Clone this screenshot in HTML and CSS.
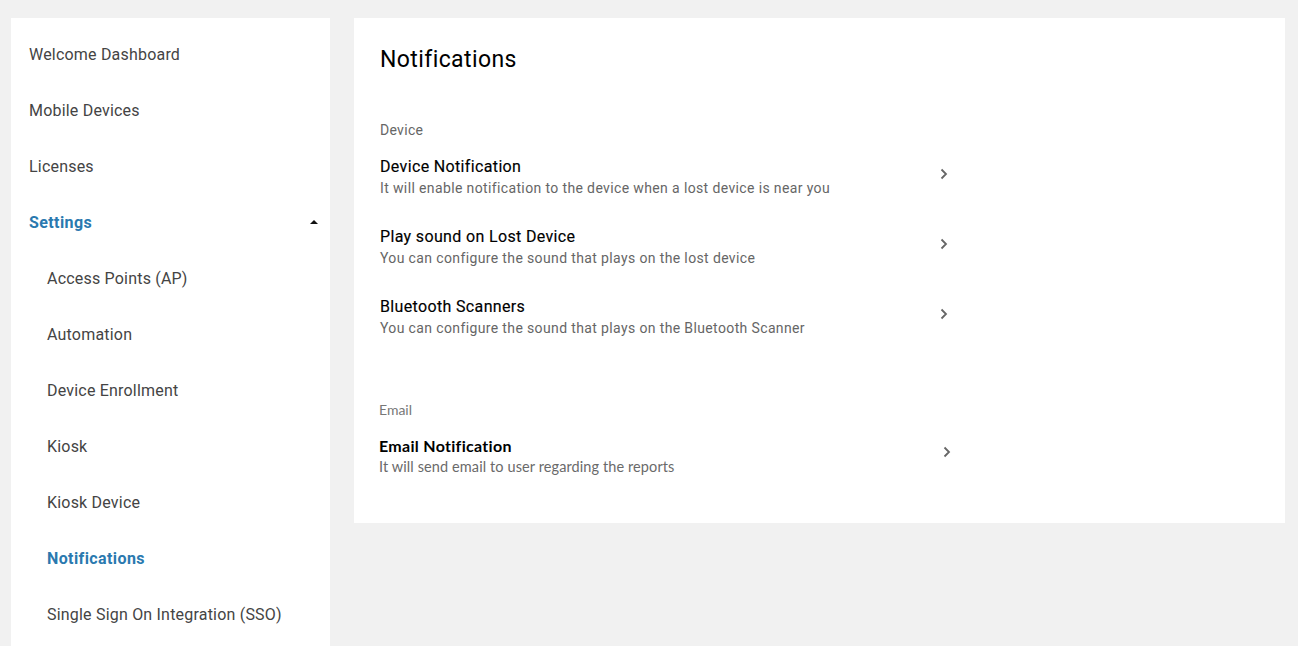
FILE: index.html
```html
<!DOCTYPE html>
<html lang="en">
<head>
  <meta charset="UTF-8">
  <title>Settings - Notifications</title>
  <meta name="viewport" content="width=device-width, initial-scale=1.0">
  <link rel="stylesheet" href="styles.css">
</head>
<body>
  <div class="layout">
    <nav class="sidebar">
      <a class="nav-item" href="#">Welcome Dashboard</a>
      <a class="nav-item" href="#">Mobile Devices</a>
      <a class="nav-item" href="#">Licenses</a>
      <a class="nav-item nav-group active" href="#">
        Settings
        <span class="caret"></span>
      </a>
      <a class="nav-item sub" href="#">Access Points (AP)</a>
      <a class="nav-item sub" href="#">Automation</a>
      <a class="nav-item sub" href="#">Device Enrollment</a>
      <a class="nav-item sub" href="#">Kiosk</a>
      <a class="nav-item sub" href="#">Kiosk Device</a>
      <a class="nav-item sub active" href="#">Notifications</a>
      <a class="nav-item sub" href="#">Single Sign On Integration (SSO)</a>
    </nav>

    <main class="panel">
      <h1>Notifications</h1>

      <section class="group">
        <div class="group-label">Device</div>
        <a class="setting" href="#">
          <div class="setting-text">
            <div class="setting-title">Device Notification</div>
            <div class="setting-desc">It will enable notification to the device when a lost device is near you</div>
          </div>
          <svg class="chevron" width="8" height="12" viewBox="0 0 8 12"><path d="M1.5 1.5 6 6l-4.5 4.5" fill="none" stroke="#666" stroke-width="1.8"/></svg>
        </a>
        <a class="setting" href="#">
          <div class="setting-text">
            <div class="setting-title">Play sound on Lost Device</div>
            <div class="setting-desc">You can configure the sound that plays on the lost device</div>
          </div>
          <svg class="chevron" width="8" height="12" viewBox="0 0 8 12"><path d="M1.5 1.5 6 6l-4.5 4.5" fill="none" stroke="#666" stroke-width="1.8"/></svg>
        </a>
        <a class="setting" href="#">
          <div class="setting-text">
            <div class="setting-title">Bluetooth Scanners</div>
            <div class="setting-desc">You can configure the sound that plays on the Bluetooth Scanner</div>
          </div>
          <svg class="chevron" width="8" height="12" viewBox="0 0 8 12"><path d="M1.5 1.5 6 6l-4.5 4.5" fill="none" stroke="#666" stroke-width="1.8"/></svg>
        </a>
      </section>

      <section class="group email">
        <div class="group-label">Email</div>
        <a class="setting" href="#">
          <div class="setting-text">
            <div class="setting-title">Email Notification</div>
            <div class="setting-desc">It will send email to user regarding the reports</div>
          </div>
          <svg class="chevron" width="8" height="12" viewBox="0 0 8 12"><path d="M1.5 1.5 6 6l-4.5 4.5" fill="none" stroke="#666" stroke-width="1.8"/></svg>
        </a>
      </section>
    </main>
  </div>
</body>
</html>
```

FILE: styles.css
```css
html, body {
  margin: 0;
  height: 100%;
}
body {
  font-family: Roboto, "Liberation Sans", Arial, sans-serif;
  background-color: #f1f1f1;
  overflow: hidden;
}
a {
  text-decoration: none;
  color: inherit;
}
.layout {
  display: flex;
  align-items: flex-start;
  gap: 24px;
  padding: 18px 13px 0 11px;
}

/* left navigation */
.sidebar {
  width: 319px;
  flex-shrink: 0;
  background: #fff;
  padding: 8px 0 40px;
  display: flex;
  flex-direction: column;
}
.nav-item {
  height: 56px;
  display: flex;
  align-items: center;
  padding-left: 18px;
  padding-right: 12px;
  font-size: 16px;
  letter-spacing: 0.2px;
  color: #444;
}
.nav-item.sub {
  padding-left: 36px;
}
.nav-item.active {
  color: #2a79af;
  font-weight: 700;
  letter-spacing: 0.4px;
}
.nav-group {
  justify-content: space-between;
}
.caret {
  width: 0;
  height: 0;
  border-left: 4px solid transparent;
  border-right: 4px solid transparent;
  border-bottom: 4px solid #111;
}

/* content panel */
.panel {
  flex: 1;
  background: #fff;
  padding: 28px 26px 47px;
}
.panel h1 {
  margin: 0;
  font-size: 23px;
  line-height: 28px;
  font-weight: 400;
  letter-spacing: 0.4px;
  color: #000;
}
.group {
  max-width: 568px;
  display: flex;
  flex-direction: column;
  gap: 30px;
  margin-top: 46px;
}
.group-label {
  font-size: 14px;
  line-height: 20px;
  letter-spacing: 0.3px;
  color: #666;
  margin-bottom: -13px;
}
.setting {
  display: flex;
  align-items: center;
  justify-content: space-between;
}
.setting-title {
  font-size: 16px;
  line-height: 20px;
  font-weight: 400;
  letter-spacing: 0.35px;
  color: #000;
  -webkit-text-stroke: 0.15px #000;
}
.setting-desc {
  margin-top: 2px;
  font-size: 14px;
  line-height: 18px;
  letter-spacing: 0.37px;
  color: #666;
}
.chevron {
  margin-top: -6px;
}

.group.email {
  margin-top: 63px;
  margin-left: -1px;
  max-width: 572px;
  font-family: Lato, "Open Sans", sans-serif;
}
.email .group-label {
  color: #777;
  letter-spacing: 0;
  margin-bottom: -14px;
}
.email .setting-title {
  font-weight: 700;
  letter-spacing: 0.3px;
  -webkit-text-stroke: 0;
}
.email .setting-desc {
  font-size: 14.5px;
  letter-spacing: 0.1px;
  color: #6a6a6a;
}
.email .chevron {
  margin-top: -9px;
}
```
